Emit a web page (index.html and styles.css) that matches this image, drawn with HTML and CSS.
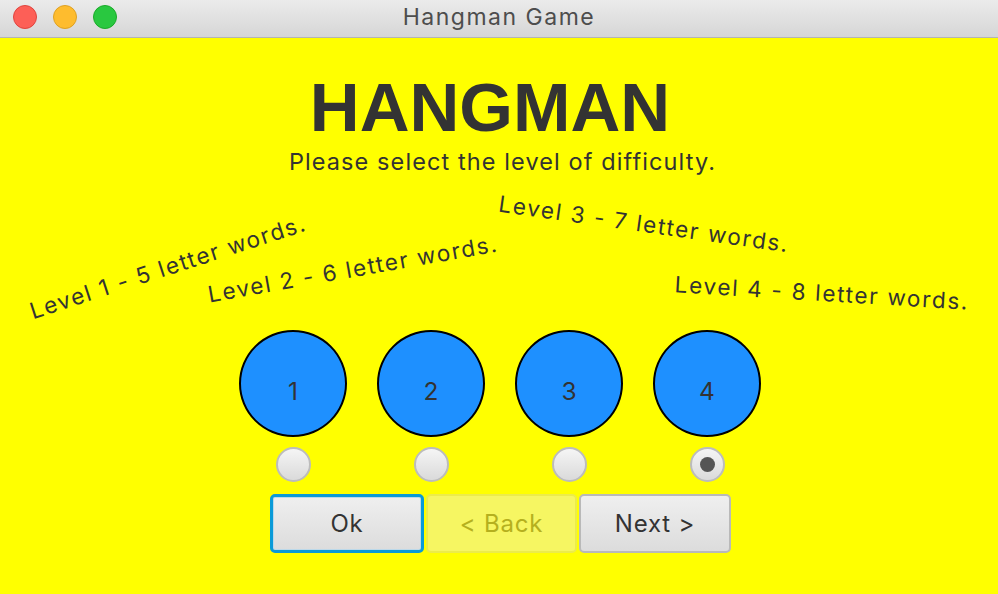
FILE: index.html
```html
<!DOCTYPE html>
<html>
<head>
<meta charset="utf-8">
<title>Hangman Game</title>
<link rel="stylesheet" href="styles.css">
</head>
<body>
<div class="window">
  <div class="titlebar">
    <div class="lights">
      <span class="light red"></span>
      <span class="light yellow"></span>
      <span class="light green"></span>
    </div>
    <div class="wtitle">Hangman Game</div>
  </div>
  <main class="content">
    <h1 class="heading">HANGMAN</h1>
    <p class="subtitle">Please select the level of difficulty.</p>
    <div class="labels">
      <span class="lvl lvl1">Level 1 - 5 letter words.</span>
      <span class="lvl lvl2">Level 2 - 6 letter words.</span>
      <span class="lvl lvl3">Level 3 - 7 letter words.</span>
      <span class="lvl lvl4">Level 4 - 8 letter words.</span>
    </div>
    <div class="levels">
      <div class="level"><div class="disc">1</div><span class="radio"></span></div>
      <div class="level"><div class="disc">2</div><span class="radio"></span></div>
      <div class="level"><div class="disc">3</div><span class="radio"></span></div>
      <div class="level"><div class="disc">4</div><span class="radio checked"></span></div>
    </div>
    <div class="buttons">
      <button class="btn focused">Ok</button>
      <button class="btn disabled">&lt; Back</button>
      <button class="btn">Next &gt;</button>
    </div>
  </main>
</div>
</body>
</html>
```
FILE: styles.css
```css
* { box-sizing: border-box; }
html, body { margin: 0; padding: 0; }
body {
  width: 998px;
  height: 594px;
  overflow: hidden;
  font-family: Inter, "Liberation Sans", sans-serif;
  color: #333;
}
.window { display: flex; flex-direction: column; height: 594px; }
.titlebar {
  height: 38px;
  flex: none;
  display: flex;
  align-items: center;
  position: relative;
  background: linear-gradient(#ebebeb, #d6d6d6);
  border-bottom: 1px solid #b4b4b4;
}
.lights { display: flex; gap: 16px; padding-left: 13px; padding-bottom: 4px; }
.light { width: 24px; height: 24px; border-radius: 50%; display: block; }
.red { background: #fd5f57; border: 1px solid #e0443e; }
.yellow { background: #febc2e; border: 1px solid #dea123; }
.green { background: #29c840; border: 1px solid #1aab29; }
.wtitle {
  position: absolute;
  left: 0; right: 0; top: 3px;
  text-align: center;
  font-size: 23px;
  letter-spacing: 1.5px;
  color: #4d4d4d;
  line-height: 28px;
}
.content {
  flex: 1;
  background: #ffff00;
  display: flex;
  flex-direction: column;
  align-items: center;
  padding-top: 35px;
}
.heading {
  margin: 0 18px 0 0;
  font-family: "Liberation Sans", Arial, sans-serif;
  font-weight: bold;
  font-size: 69px;
  line-height: 69px;
  color: #333;
}
.subtitle {
  margin: 6px 0 0 7px;
  font-size: 23.5px;
  letter-spacing: 1.1px;
  line-height: 28px;
}
.labels {
  position: relative;
  width: 998px;
  height: 154px;
}
.lvl {
  position: absolute;
  font-size: 22.5px;
  letter-spacing: 1.7px;
  line-height: 22px;
  white-space: nowrap;
  transform: translate(-50%, -50%) rotate(var(--a));
}
.lvl1 { left: 168px; top: 91px; --a: -18deg; }
.lvl2 { left: 353px; top: 93px; --a: -10deg; }
.lvl3 { left: 644px; top: 48px; --a: 8deg; }
.lvl4 { left: 822px; top: 117px; --a: 3.4deg; }
.levels {
  display: flex;
  gap: 30px;
  margin-left: 2px;
}
.level {
  display: flex;
  flex-direction: column;
  align-items: center;
  gap: 10px;
}
.disc {
  width: 108px;
  height: 107px;
  border-radius: 50%;
  background: #1e90ff;
  border: 2px solid #000;
  display: flex;
  align-items: center;
  justify-content: center;
  padding-top: 14px;
  font-size: 24.5px;
  color: #333;
}
.radio {
  width: 35px;
  height: 35px;
  border-radius: 50%;
  border: 2px solid #bcbcbc;
  background: linear-gradient(#f5f5f5, #dadada);
  display: flex;
  align-items: center;
  justify-content: center;
}
.radio.checked::after {
  content: "";
  width: 15px;
  height: 15px;
  border-radius: 50%;
  background: #555;
}
.buttons {
  display: flex;
  gap: 2px;
  margin-top: 12px;
  margin-left: 3px;
}
.btn {
  width: 152px;
  height: 59px;
  font-family: Inter, "Liberation Sans", sans-serif;
  font-size: 24px;
  letter-spacing: 0.8px;
  color: #333;
  border-radius: 5px;
  border: 2px solid #b9b9b9;
  background: linear-gradient(#efefef, #dcdcdc);
  padding: 0;
}
.btn.focused {
  width: 154px;
  border: 3px solid #0a9ad8;
  box-shadow: inset 0 0 0 1px #bcd9ea;
}
.btn.disabled {
  width: 151px;
  background: #f6f662;
  border-color: #ecec4a;
  color: #b5b01e;
}
```
